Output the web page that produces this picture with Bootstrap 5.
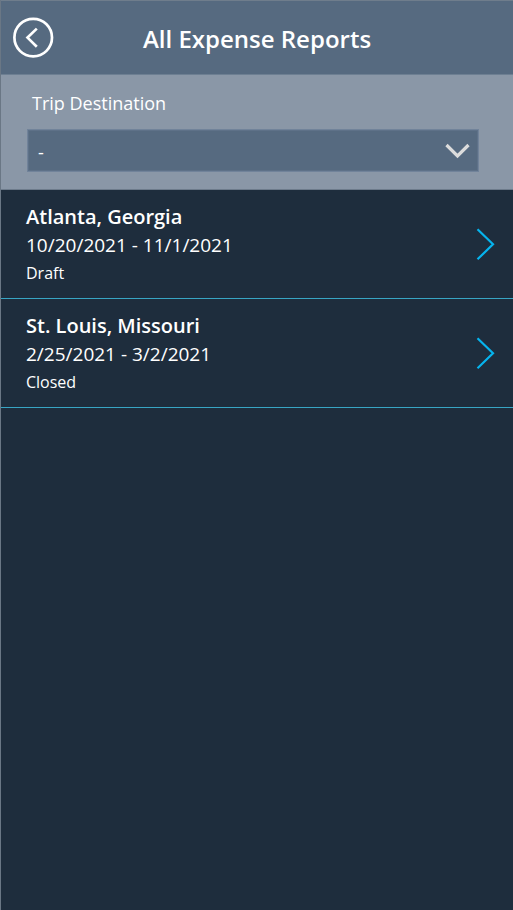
<!DOCTYPE html>
<html lang="en">
<head>
<meta charset="utf-8">
<meta name="viewport" content="width=device-width, initial-scale=1">
<title>All Expense Reports</title>
<link href="https://cdn.jsdelivr.net/npm/bootstrap@5.3.0/dist/css/bootstrap.min.css" rel="stylesheet">
<style>
  body { font-family: "Open Sans", "Noto Sans", sans-serif; background: #1e2d3d; color: #fff; }
  .app-screen { border-left: 1px solid #6a7785; }
  .app-header { height: 75px; background: #566a80; border-top: 1px solid #6f7d8c; border-bottom: 1px solid #6d7f92; display: grid; grid-template-columns: 64px 1fr 64px; }
  .app-title { font-size: 24px; line-height: 32px; font-weight: 600; padding-top: 2px; }
  .filter-panel { height: 115px; background: #8a97a7; border-bottom: 1px solid #6d7b8b; padding: 16px 34px 0 26px; }
  .filter-label { font-size: 18px; line-height: 24px; padding-left: 5px; margin-bottom: 14px; }
  .filter-box { position: relative; }
  .filter-box select { appearance: none; width: 100%; height: 43px; background: #566a80; color: #fff; border: 1px solid #71839a; border-radius: 0; outline: 0; padding: 4px 10px 0; font-size: 18px; box-shadow: inset 0 0 0 1px #5e7188; }
  .filter-box svg { position: absolute; right: 9px; top: 14px; pointer-events: none; }
  .report-row { height: 109px; border-bottom: 1px solid #38a5c4; padding: 12px 18px 0 25px; color: #fff; }
  .place { font-size: 20px; line-height: 29px; font-weight: 600; }
  .dates { font-size: 19px; line-height: 29px; }
  .state { font-size: 16px; line-height: 26px; }
</style>
<script src="https://cdn.jsdelivr.net/npm/bootstrap@5.3.0/dist/js/bootstrap.bundle.min.js" defer></script>
</head>
<body>
<div class="app-screen min-vh-100">
  <header class="app-header align-items-center">
    <button type="button" class="btn p-0 border-0 ms-2 ps-1 d-flex" aria-label="Back">
      <svg width="42" height="42" viewBox="0 0 42 42" fill="none" stroke="#fff" stroke-width="2.7"><circle cx="20.2" cy="20.6" r="18.8"/><path d="M23.800 11.600 14.500 20.600l9.300 9.200"/></svg>
    </button>
    <h1 class="app-title mb-0 text-center text-nowrap">All Expense Reports</h1>
  </header>
  <main>
    <section class="filter-panel">
      <label class="filter-label d-block" for="destination">Trip Destination</label>
      <div class="filter-box">
        <select id="destination"><option>-</option><option>Atlanta, Georgia</option><option>St. Louis, Missouri</option></select>
        <svg width="25" height="17" viewBox="0 0 25 17" fill="none" stroke="#dcdcdc" stroke-width="3.2"><path d="M1.5 2 12.5 13 23.500 2"/></svg>
      </div>
    </section>
    <ul class="list-unstyled m-0">
      <li><a href="#atlanta" class="report-row d-flex justify-content-between text-decoration-none">
        <div><div class="place">Atlanta, Georgia</div><div class="dates">10/20/2021 - 11/1/2021</div><div class="state">Draft</div></div>
        <svg class="mt-4" width="20" height="36" viewBox="0 0 20 36" fill="none" stroke="#06b4ee" stroke-width="2.2"><path d="M2.500 3.300 18 18.300 2.500 33.300"/></svg>
      </a></li>
      <li><a href="#st-louis" class="report-row d-flex justify-content-between text-decoration-none">
        <div><div class="place">St. Louis, Missouri</div><div class="dates">2/25/2021 - 3/2/2021</div><div class="state">Closed</div></div>
        <svg class="mt-4" width="20" height="36" viewBox="0 0 20 36" fill="none" stroke="#06b4ee" stroke-width="2.2"><path d="M2.500 3.300 18 18.300 2.500 33.300"/></svg>
      </a></li>
    </ul>
  </main>
</div>
</body>
</html>
